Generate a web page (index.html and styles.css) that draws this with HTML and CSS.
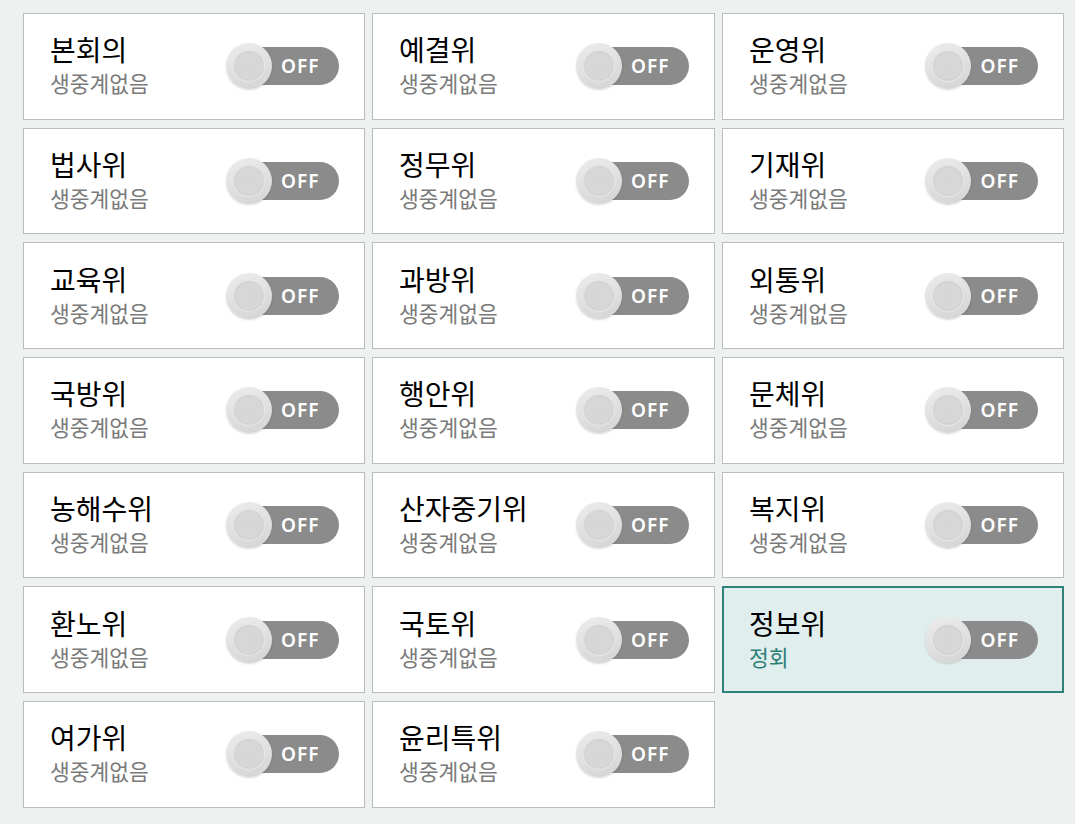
FILE: index.html
```html
<!DOCTYPE html>
<html lang="ko">
<head>
<meta charset="utf-8">
<link rel="stylesheet" href="styles.css">
</head>
<body>
<div class="grid">
  <div class="card"><div class="info"><div class="name">본회의</div><div class="status">생중계없음</div></div><div class="toggle"><span class="track">OFF</span><span class="knob"></span></div></div>
  <div class="card"><div class="info"><div class="name">예결위</div><div class="status">생중계없음</div></div><div class="toggle"><span class="track">OFF</span><span class="knob"></span></div></div>
  <div class="card"><div class="info"><div class="name">운영위</div><div class="status">생중계없음</div></div><div class="toggle"><span class="track">OFF</span><span class="knob"></span></div></div>
  <div class="card"><div class="info"><div class="name">법사위</div><div class="status">생중계없음</div></div><div class="toggle"><span class="track">OFF</span><span class="knob"></span></div></div>
  <div class="card"><div class="info"><div class="name">정무위</div><div class="status">생중계없음</div></div><div class="toggle"><span class="track">OFF</span><span class="knob"></span></div></div>
  <div class="card"><div class="info"><div class="name">기재위</div><div class="status">생중계없음</div></div><div class="toggle"><span class="track">OFF</span><span class="knob"></span></div></div>
  <div class="card"><div class="info"><div class="name">교육위</div><div class="status">생중계없음</div></div><div class="toggle"><span class="track">OFF</span><span class="knob"></span></div></div>
  <div class="card"><div class="info"><div class="name">과방위</div><div class="status">생중계없음</div></div><div class="toggle"><span class="track">OFF</span><span class="knob"></span></div></div>
  <div class="card"><div class="info"><div class="name">외통위</div><div class="status">생중계없음</div></div><div class="toggle"><span class="track">OFF</span><span class="knob"></span></div></div>
  <div class="card"><div class="info"><div class="name">국방위</div><div class="status">생중계없음</div></div><div class="toggle"><span class="track">OFF</span><span class="knob"></span></div></div>
  <div class="card"><div class="info"><div class="name">행안위</div><div class="status">생중계없음</div></div><div class="toggle"><span class="track">OFF</span><span class="knob"></span></div></div>
  <div class="card"><div class="info"><div class="name">문체위</div><div class="status">생중계없음</div></div><div class="toggle"><span class="track">OFF</span><span class="knob"></span></div></div>
  <div class="card"><div class="info"><div class="name">농해수위</div><div class="status">생중계없음</div></div><div class="toggle"><span class="track">OFF</span><span class="knob"></span></div></div>
  <div class="card"><div class="info"><div class="name">산자중기위</div><div class="status">생중계없음</div></div><div class="toggle"><span class="track">OFF</span><span class="knob"></span></div></div>
  <div class="card"><div class="info"><div class="name">복지위</div><div class="status">생중계없음</div></div><div class="toggle"><span class="track">OFF</span><span class="knob"></span></div></div>
  <div class="card"><div class="info"><div class="name">환노위</div><div class="status">생중계없음</div></div><div class="toggle"><span class="track">OFF</span><span class="knob"></span></div></div>
  <div class="card"><div class="info"><div class="name">국토위</div><div class="status">생중계없음</div></div><div class="toggle"><span class="track">OFF</span><span class="knob"></span></div></div>
  <div class="card active"><div class="info"><div class="name">정보위</div><div class="status">정회</div></div><div class="toggle"><span class="track">OFF</span><span class="knob"></span></div></div>
  <div class="card"><div class="info"><div class="name">여가위</div><div class="status">생중계없음</div></div><div class="toggle"><span class="track">OFF</span><span class="knob"></span></div></div>
  <div class="card"><div class="info"><div class="name">윤리특위</div><div class="status">생중계없음</div></div><div class="toggle"><span class="track">OFF</span><span class="knob"></span></div></div>
</div>
</body>
</html>
```
FILE: styles.css
```css
html, body {
  margin: 0;
  padding: 0;
  background: #edf1f0;
}
body {
  font-family: "Noto Sans CJK KR", "Noto Sans", sans-serif;
}
.grid {
  display: grid;
  grid-template-columns: 341.5px 342.5px 342px;
  grid-auto-rows: 106.67px;
  column-gap: 7.5px;
  row-gap: 8px;
  padding: 13px 0 0 23px;
}
.card {
  box-sizing: border-box;
  background: #fff;
  border: 1px solid #bcbcbc;
  display: flex;
  align-items: center;
  justify-content: space-between;
  padding: 0 25px 0 26px;
}
.card.active {
  background: #e0eeed;
  border: 2px solid #2f8278;
  padding: 0 24px 0 25px;
}
.info {
  display: flex;
  flex-direction: column;
}
.name {
  font-size: 28px;
  line-height: 34px;
  color: #000;
}
.status {
  font-size: 21.5px;
  line-height: 34px;
  color: #7a7a7a;
}
.active .status {
  color: #2d8078;
}
.toggle {
  position: relative;
  width: 113px;
  height: 46px;
}
.track {
  position: absolute;
  left: 14px;
  right: 0;
  top: 4px;
  bottom: 4px;
  border-radius: 19px;
  background: #8b8b8b;
  color: #fff;
  font-family: "Noto Sans", sans-serif;
  font-weight: 600;
  font-size: 19px;
  letter-spacing: 1px;
  line-height: 38px;
  text-align: right;
  padding-right: 19px;
  box-sizing: border-box;
}
.knob {
  position: absolute;
  left: 0;
  top: 0;
  width: 46px;
  height: 46px;
  border-radius: 50%;
  background:
    radial-gradient(circle at 50% 50%, #d6d6d6 0, #d7d7d7 13px, #d0d0d0 14px, #e3e3e3 15.5px, rgba(226,226,226,0) 17px),
    linear-gradient(160deg, #ededed 0%, #dfdfdf 55%, #d3d3d3 100%);
  box-shadow: 0 1px 2px rgba(0,0,0,0.16);
}
```
